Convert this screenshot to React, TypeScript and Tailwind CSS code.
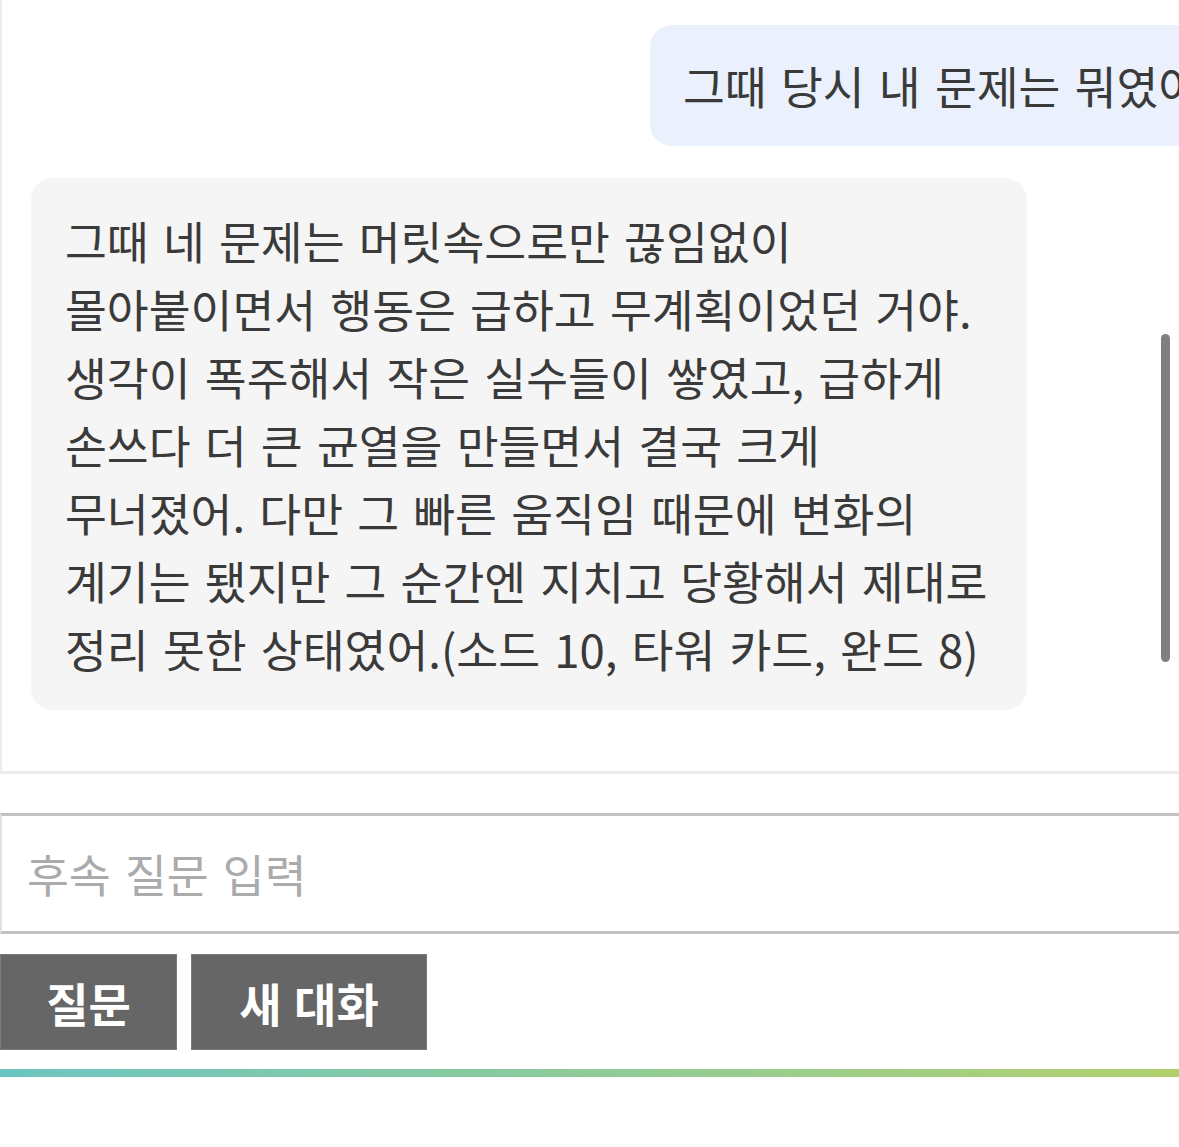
import React from "react";

const lines = [
  "그때 네 문제는 머릿속으로만 끊임없이",
  "몰아붙이면서 행동은 급하고 무계획이었던 거야.",
  "생각이 폭주해서 작은 실수들이 쌓였고, 급하게",
  "손쓰다 더 큰 균열을 만들면서 결국 크게",
  "무너졌어. 다만 그 빠른 움직임 때문에 변화의",
  "계기는 됐지만 그 순간엔 지치고 당황해서 제대로",
  "정리 못한 상태였어.(소드 10, 타워 카드, 완드 8)",
];

export default function App() {
  return (
    <div
      className="relative w-[1179px] h-[1147px] overflow-hidden bg-white text-[#3a3a3a]"
      style={{ fontFamily: '"Noto Sans CJK KR", "Noto Sans", sans-serif' }}
    >
      {/* chat area */}
      <div className="relative h-[771px] overflow-hidden border-l-2 border-[#ececec]">
        <div className="flex pt-[25px] pl-[648px]">
          <div className="flex h-[121px] w-[600px] shrink-0 items-center rounded-[22px] bg-[#eaf1fc] pl-[33px]">
            <span className="whitespace-nowrap text-[45.5px] [word-spacing:4px] leading-none">
              그때 당시 내 문제는 뭐였어
            </span>
          </div>
        </div>
        <div className="mt-[32px] ml-[29px] w-[996px] rounded-[22px] bg-[#f5f5f5] pl-[34px] py-[28px]">
          {lines.map((l, i) => (
            <div
              key={i}
              className="whitespace-nowrap text-[45.5px] leading-[68px] [word-spacing:4px]"
            >
              {l}
            </div>
          ))}
        </div>
        <div className="absolute left-[1159px] top-[334px] h-[328px] w-[9px] rounded-full bg-[#808080]" />
      </div>
      <div className="h-[3px] bg-[#ebebeb]" />

      {/* input */}
      <div className="mt-[39px] flex h-[121px] items-center border-y-[3px] border-l-2 border-y-[#c2c2c2] border-l-[#e2e2e2] pl-[25px]">
        <span className="text-[45.5px] [word-spacing:4px] text-[#ababab] leading-none">
          후속 질문 입력
        </span>
      </div>

      {/* buttons */}
      <div className="mt-[20px] flex gap-[14px]">
        <button className="flex h-[96px] w-[177px] items-center justify-center bg-[#666666] border border-[#7a7a7a] text-white text-[46px] font-bold [word-spacing:2px]">
          질문
        </button>
        <button className="flex h-[96px] w-[236px] items-center justify-center bg-[#666666] border border-[#7a7a7a] text-white text-[46px] font-bold [word-spacing:2px]">
          새 대화
        </button>
      </div>

      <div className="mt-[19px] h-[8px] bg-gradient-to-r from-[#6cc5c1] via-[#8ecb98] to-[#b2d06c]" />
    </div>
  );
}
